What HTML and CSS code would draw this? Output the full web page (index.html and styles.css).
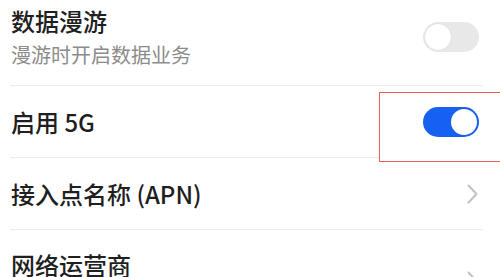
FILE: index.html
```html
<!DOCTYPE html>
<html lang="zh-CN">
<head>
<meta charset="utf-8">
<link rel="stylesheet" href="styles.css">
</head>
<body>
<div class="list">
  <div class="row tall">
    <div class="text">
      <div class="title">数据漫游</div>
      <div class="sub">漫游时开启数据业务</div>
    </div>
    <div class="switch"><span class="knob"></span></div>
  </div>
  <div class="row">
    <div class="text"><div class="title">启用 5G</div></div>
    <div class="switch on"><span class="knob"></span></div>
  </div>
  <div class="row">
    <div class="text"><div class="title">接入点名称 (APN)</div></div>
    <svg class="chev" width="11" height="20" viewBox="0 0 11 20"><path d="M1.5 1.5 L9.5 10 L1.5 18.5" fill="none" stroke="#c2c2c2" stroke-width="2" stroke-linecap="round" stroke-linejoin="round"/></svg>
  </div>
  <div class="row tall">
    <div class="text">
      <div class="title">网络运营商</div>
      <div class="sub">中国移动</div>
    </div>
    <svg class="chev" width="11" height="20" viewBox="0 0 11 20"><path d="M1.5 1.5 L9.5 10 L1.5 18.5" fill="none" stroke="#c2c2c2" stroke-width="2" stroke-linecap="round" stroke-linejoin="round"/></svg>
  </div>
</div>
<div class="mark"></div>
</body>
</html>
```

FILE: styles.css
```css
html, body {
  margin: 0;
  padding: 0;
  background: #ffffff;
  overflow: hidden;
}
body {
  width: 500px;
  height: 277px;
  position: relative;
  font-family: "Noto Sans CJK SC", "Noto Sans", sans-serif;
}
.list {
  margin-top: -14px;
  padding: 0 17px 0 10px;
}
.row {
  display: flex;
  align-items: center;
  justify-content: space-between;
  height: 71px;
  border-bottom: 1px solid #ececec;
}
.row.tall {
  height: auto;
  padding: 19px 0 16px;
}
.text {
  padding-left: 1px;
}
.title {
  font-size: 24px;
  line-height: 32px;
  font-weight: 500;
  color: #1f1f1f;
}
.sub {
  margin-top: 4px;
  font-size: 20px;
  line-height: 28px;
  color: #8c8c8c;
}
.switch {
  position: relative;
  z-index: 2;
  width: 56px;
  height: 30px;
  border-radius: 15px;
  background: #e8e8e8;
  margin-right: 4px;
  display: flex;
  align-items: center;
  padding: 0 2px;
  box-sizing: border-box;
}
.switch .knob {
  width: 26px;
  height: 26px;
  border-radius: 50%;
  background: #ffffff;
  box-shadow: 0 0 1px rgba(0,0,0,0.15);
}
.switch.on {
  background: #1660f2;
  justify-content: flex-end;
}
.chev {
  margin-right: 5px;
}
.mark {
  position: absolute;
  left: 379px;
  top: 92px;
  width: 130px;
  height: 68px;
  border: 1.5px solid #e8605a;
  background: #ffffff;
  z-index: 1;
}
```
